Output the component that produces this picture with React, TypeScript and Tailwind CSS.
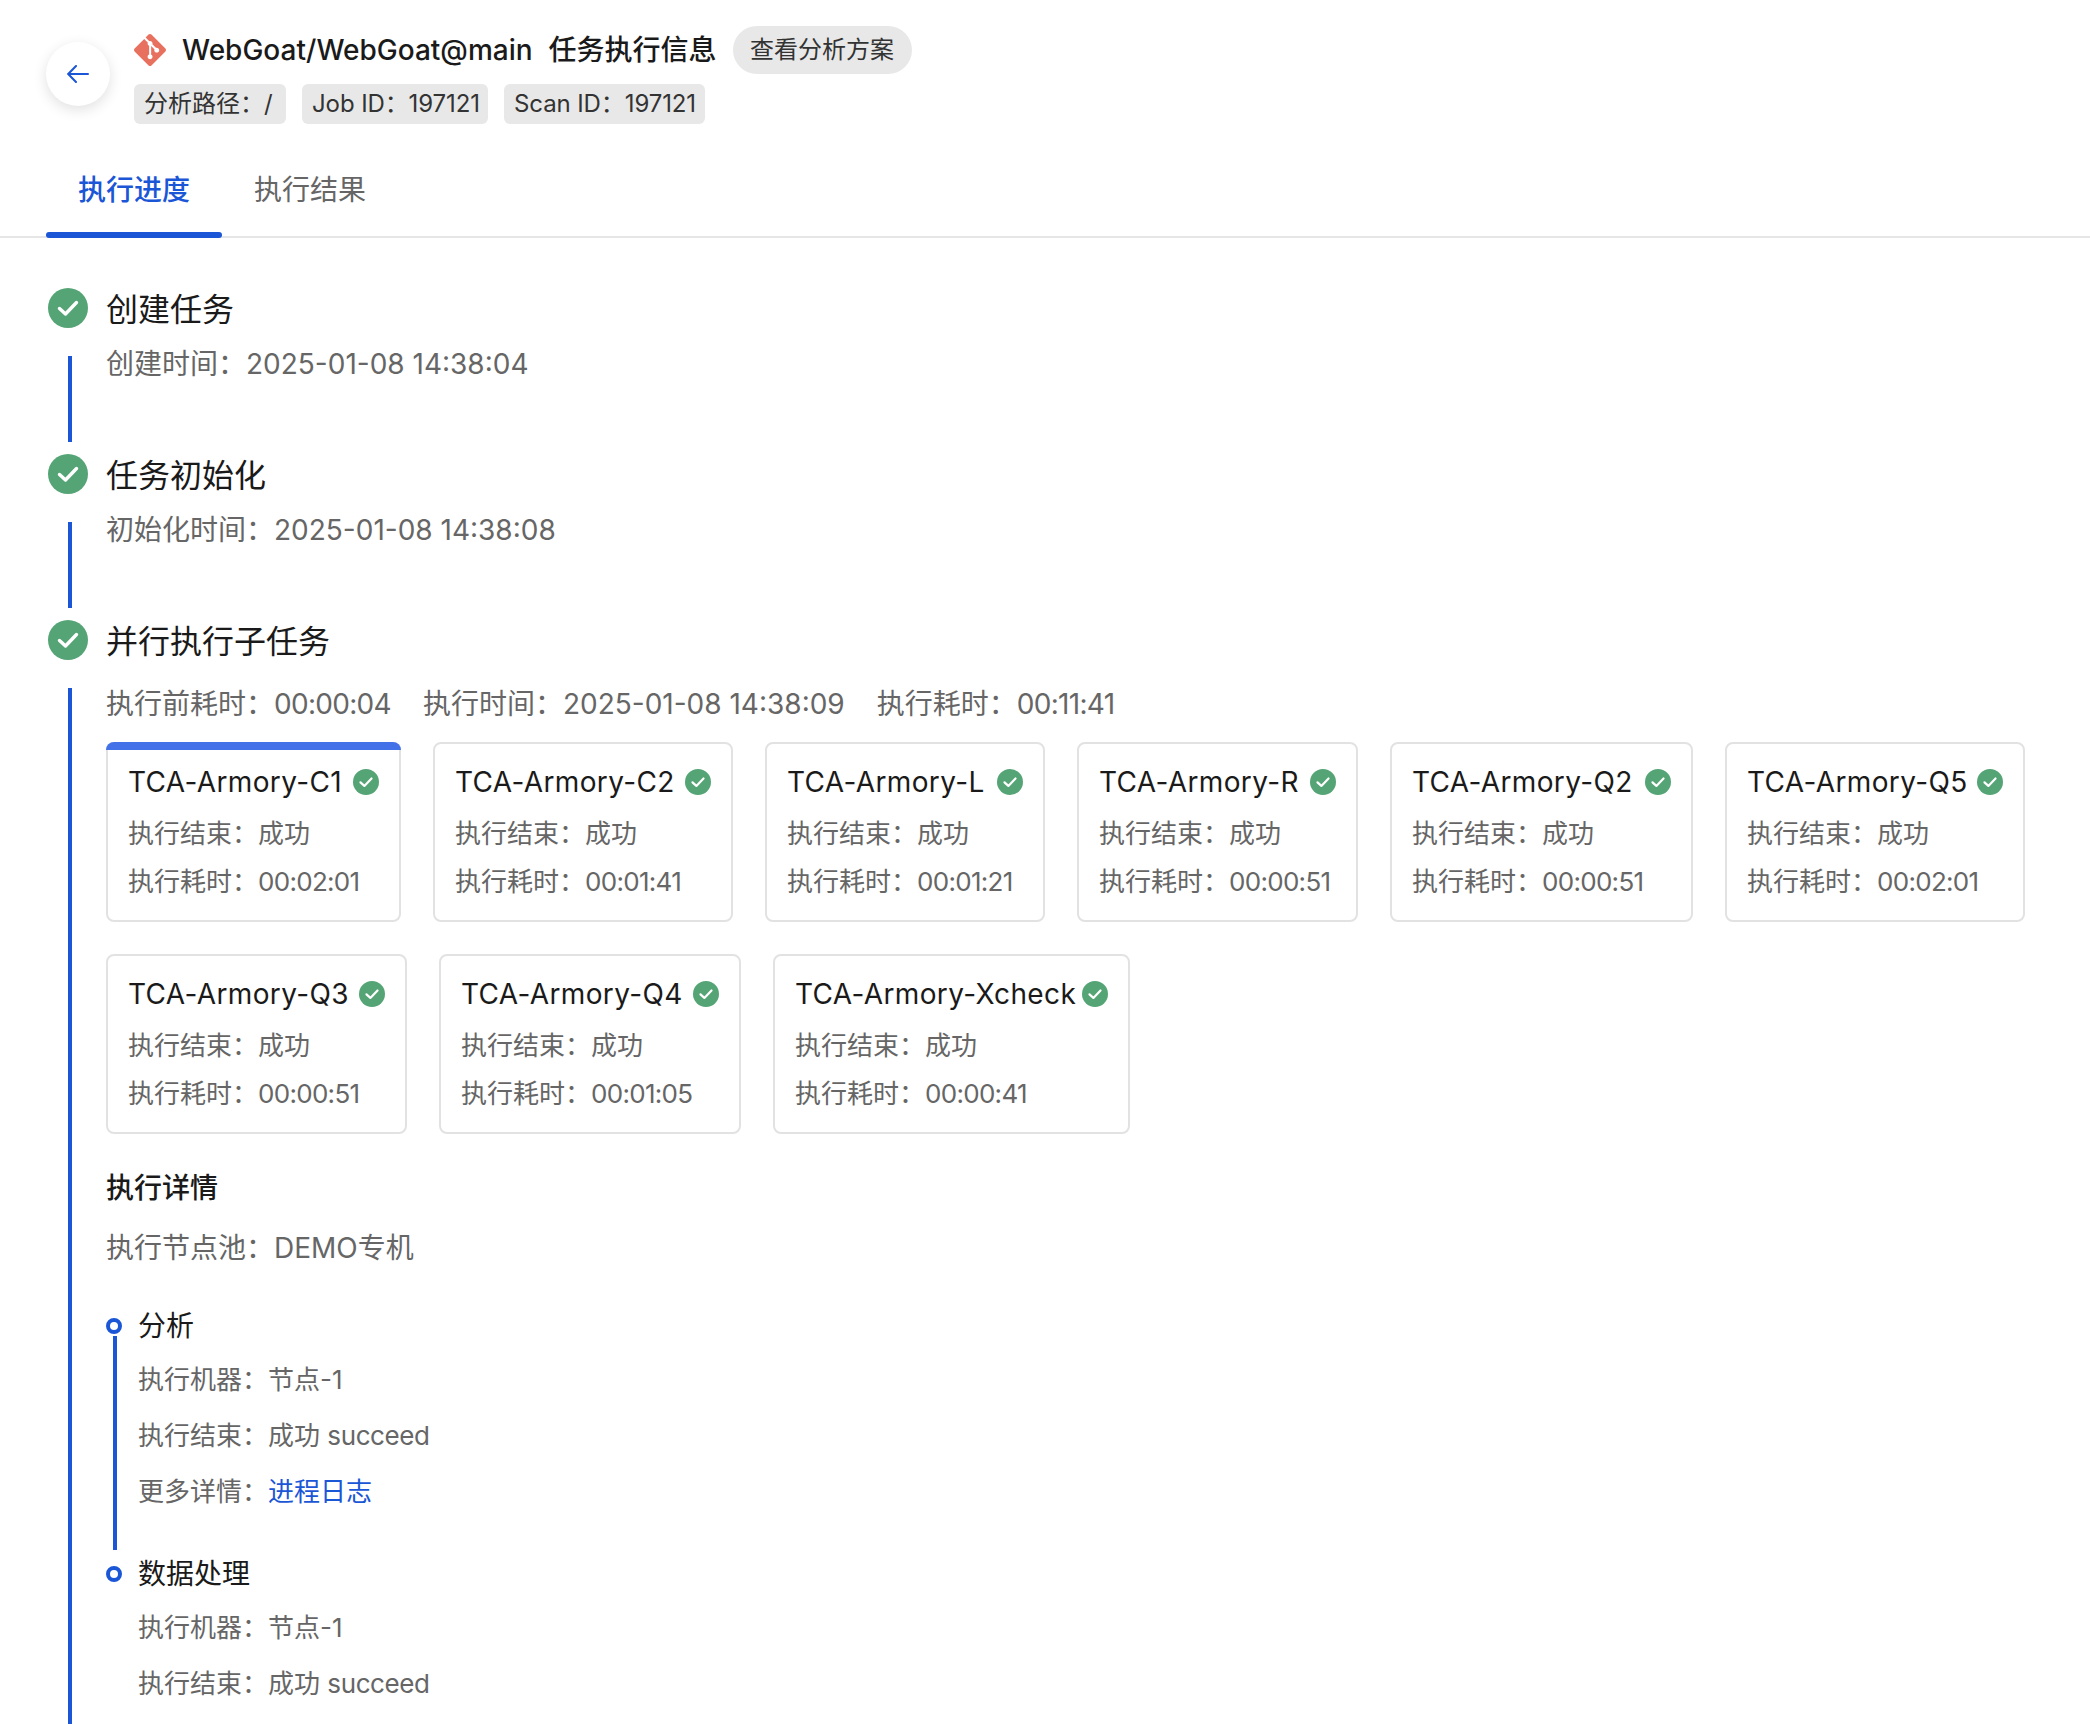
import React from 'react';
import { SiGit } from 'react-icons/si';

const font = 'font-["Inter","Noto_Sans_CJK_SC",sans-serif]';

const CheckBadge = ({ className }: { className: string }) => (
    <svg viewBox="0 0 40 40" className={className}>
        <circle cx="20" cy="20" r="20" fill="#55a475" />
        <path d="M11.5 20.5L17.5 26L28.5 14.5" fill="none" stroke="#fff" strokeWidth="3.4" strokeLinecap="round" strokeLinejoin="round" />
    </svg>
);

const BackArrow = () => (
    <svg width="22" height="18" viewBox="0 0 22 18" fill="none" stroke="#1a56d6" strokeWidth="2" strokeLinecap="round" strokeLinejoin="round">
        <path d="M21 9H1.5" />
        <path d="M9 1L1.2 9L9 17" />
    </svg>
);

const Line = ({ className = '' }: { className?: string }) => <div className={`w-1 bg-[#1a56d6] ${className}`} />;

const Num = ({ children }: { children: React.ReactNode }) => <span className="tracking-[-0.7px]">{children}</span>;

const jobs = [
    [
        { name: 'TCA-Armory-C1', time: '00:02:01', w: 'w-[295px]', active: true },
        { name: 'TCA-Armory-C2', time: '00:01:41', w: 'w-[300px]' },
        { name: 'TCA-Armory-L', time: '00:01:21', w: 'w-[280px]' },
        { name: 'TCA-Armory-R', time: '00:00:51', w: 'w-[281px]' },
        { name: 'TCA-Armory-Q2', time: '00:00:51', w: 'w-[303px]' },
        { name: 'TCA-Armory-Q5', time: '00:02:01', w: 'w-[300px]' },
    ],
    [
        { name: 'TCA-Armory-Q3', time: '00:00:51', w: 'w-[301px]' },
        { name: 'TCA-Armory-Q4', time: '00:01:05', w: 'w-[302px]' },
        { name: 'TCA-Armory-Xcheck', time: '00:00:41', w: 'w-[357px]' },
    ],
];

const JobCard = ({ job }: { job: { name: string; time: string; w: string; active?: boolean } }) => (
    <div className={`relative h-[180px] shrink-0 rounded-lg border-2 border-[#e2e2e2] px-5 pt-[18px] ${job.w}`}>
        {job.active && <div className="absolute -left-[2px] -right-[2px] -top-[2px] h-2 rounded-t-lg bg-[#4371e8]" />}
        <div className="flex h-10 items-center justify-between text-[28px] leading-10 text-[#1a1a1a]">
            <span className="whitespace-nowrap tracking-[0.35px]">{job.name}</span>
            <CheckBadge className="h-[26px] w-[26px] shrink-0" />
        </div>
        <div className="mt-[12px] whitespace-nowrap text-[26px] leading-10 text-[#666]">执行结束：成功</div>
        <div className="mt-2 whitespace-nowrap text-[26px] leading-10 text-[#666]">
            执行耗时：<Num>{job.time}</Num>
        </div>
    </div>
);

const Step = ({ title, children, grow }: { title: string; children: React.ReactNode; grow?: boolean }) => (
    <div className={`flex gap-[18px] ${grow ? 'flex-1' : 'h-[166px] pb-3'}`}>
        <div className="flex w-10 shrink-0 flex-col items-center">
            <CheckBadge className="h-10 w-10 shrink-0" />
            <Line className="ml-1 mt-[28px] flex-1" />
        </div>
        <div className="min-w-0 flex-1">
            <div className="pt-[2px] text-[32px] leading-10 text-[#1a1a1a]">{title}</div>
            {children}
        </div>
    </div>
);

const SubStage = ({ title, rows, last }: { title: string; rows: React.ReactNode[]; last?: boolean }) => (
    <div className={`flex gap-4 ${last ? '' : 'h-[248px] pb-1'}`}>
        <div className="flex w-4 shrink-0 flex-col pt-3">
            <div className="h-4 w-4 rounded-full border-4 border-[#1a56d6]" />
            {!last && <Line className="ml-[7px] mt-[2px] flex-1" />}
        </div>
        <div>
            <div className="text-[28px] leading-10 text-[#1a1a1a]">{title}</div>
            <div className="mt-[14px] flex flex-col gap-4 text-[26px] leading-10 text-[#666]">{rows}</div>
        </div>
    </div>
);

export default function App() {
    return (
        <div className={`flex h-[1724px] flex-col overflow-hidden bg-white ${font}`}>
            <header>
                <div className="flex gap-6 pl-[46px] pt-[26px]">
                    <button className="mt-4 flex h-16 w-16 items-center justify-center rounded-full bg-white shadow-[0_4px_14px_rgba(0,0,0,0.12)]">
                        <BackArrow />
                    </button>
                    <div>
                        <div className="flex h-12 items-center gap-4">
                            <div className="flex items-center gap-4">
                                <SiGit className="h-8 w-8 text-[#e8705f]" />
                                <span className="text-[28px] font-medium text-[#1a1a1a]">WebGoat/WebGoat@main</span>
                            </div>
                            <span className="text-[28px] font-medium text-[#1a1a1a]">任务执行信息</span>
                            <span className="flex h-12 w-[179px] items-center justify-center rounded-full bg-[#e8e8e8] text-2xl text-[#333]">查看分析方案</span>
                        </div>
                        <div className="mt-[10px] flex gap-4 whitespace-nowrap text-2xl text-[#333]">
                            <span className="flex h-10 w-[152px] items-center rounded-md bg-[#e8e8e8] px-[10px]">分析路径：/</span>
                            <span className="flex h-10 w-[186px] items-center rounded-md bg-[#e8e8e8] px-[10px] tracking-[-0.1px]">Job ID：197121</span>
                            <span className="flex h-10 w-[201px] items-center rounded-md bg-[#e8e8e8] px-[10px] tracking-[-0.1px]">Scan ID：197121</span>
                        </div>
                    </div>
                </div>
                <nav className="mt-[18px] flex h-[96px] items-start border-b-2 border-[#e6e6e6] pl-[46px] text-[28px]">
                    <div className="relative flex h-[96px] shrink-0 items-center px-8 font-medium text-[#1a56d6]">
                        执行进度
                        <div className="absolute inset-x-0 bottom-0 h-[6px] rounded-full bg-[#1a56d6]" />
                    </div>
                    <div className="flex h-[96px] shrink-0 items-center px-8 text-[#666]">执行结果</div>
                </nav>
            </header>

            <main className="flex flex-1 flex-col pl-[48px] pt-[50px]">
                <Step title="创建任务">
                    <div className="mt-[14px] text-[28px] leading-10 text-[#666]">创建时间：2025-01-08 14:38:04</div>
                </Step>
                <Step title="任务初始化">
                    <div className="mt-[14px] text-[28px] leading-10 text-[#666]">初始化时间：2025-01-08 14:38:08</div>
                </Step>
                <Step title="并行执行子任务" grow>
                    <div className="mt-[22px] flex gap-8 text-[28px] leading-10 text-[#666]">
                        <span>
                            执行前耗时：<Num>00:00:04</Num>
                        </span>
                        <span>执行时间：2025-01-08 14:38:09</span>
                        <span>
                            执行耗时：<Num>00:11:41</Num>
                        </span>
                    </div>
                    <div className="mt-[18px] flex flex-col gap-8">
                        {jobs.map((row, i) => (
                            <div key={i} className="flex gap-8">
                                {row.map((job) => (
                                    <JobCard key={job.name} job={job} />
                                ))}
                            </div>
                        ))}
                    </div>
                    <div className="mt-[34px] text-[28px] font-medium leading-10 text-[#1a1a1a]">执行详情</div>
                    <div className="mt-5 text-[28px] leading-10 text-[#666]">执行节点池：DEMO专机</div>
                    <div className="mt-[38px]">
                        <SubStage
                            title="分析"
                            rows={[
                                <div key="a">执行机器：节点-1</div>,
                                <div key="b">
                                    执行结束：成功 <span className="tracking-[-0.4px]">succeed</span>
                                </div>,
                                <div key="c">
                                    更多详情：<span className="text-[#1a56d6]">进程日志</span>
                                </div>,
                            ]}
                        />
                        <SubStage
                            last
                            title="数据处理"
                            rows={[
                                <div key="a">执行机器：节点-1</div>,
                                <div key="b">
                                    执行结束：成功 <span className="tracking-[-0.4px]">succeed</span>
                                </div>,
                            ]}
                        />
                    </div>
                </Step>
            </main>
        </div>
    );
}
